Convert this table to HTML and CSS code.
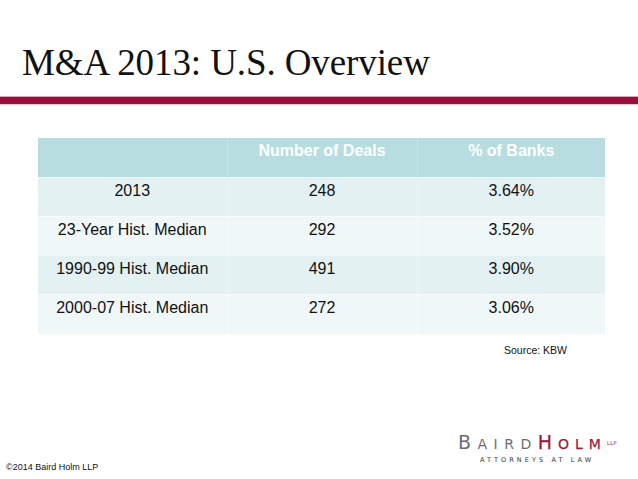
FILE: index.html
```html
<!DOCTYPE html>
<html>
<head>
<meta charset="utf-8">
<link rel="stylesheet" href="styles.css">
</head>
<body>
<div class="slide">
  <h1 class="title">M&amp;A 2013: U.S. Overview</h1>
  <div class="rule"></div>
  <table class="data">
    <thead>
      <tr><th></th><th>Number of Deals</th><th>% of Banks</th></tr>
    </thead>
    <tbody>
      <tr class="odd"><td>2013</td><td>248</td><td>3.64%</td></tr>
      <tr class="even"><td>23-Year Hist. Median</td><td>292</td><td>3.52%</td></tr>
      <tr class="odd"><td>1990-99 Hist. Median</td><td>491</td><td>3.90%</td></tr>
      <tr class="even last"><td>2000-07 Hist. Median</td><td>272</td><td>3.06%</td></tr>
    </tbody>
  </table>
  <div class="source">Source: KBW</div>
  <div class="footer">
    <div class="copy">©2014 Baird Holm LLP</div>
    <div class="logo">
      <div class="logo-name"><span class="baird"><span class="cap">B</span>AIRD</span><span class="holm"><span class="cap">H</span>OLM</span><span class="llp">LLP</span></div>
      <div class="logo-sub">ATTORNEYS AT LAW</div>
    </div>
  </div>
</div>
</body>
</html>
```

FILE: styles.css
```css
html, body {
  margin: 0;
  padding: 0;
  background: #ffffff;
}
.slide {
  width: 638px;
  height: 479px;
  overflow: hidden;
  display: flex;
  flex-direction: column;
  font-family: "Liberation Sans", Arial, sans-serif;
}
.title {
  margin: 43px 0 0 22px;
  font-family: "Liberation Serif", "Times New Roman", serif;
  font-weight: normal;
  font-size: 37px;
  line-height: 40px;
  color: #111111;
  letter-spacing: -0.1px;
}
.rule {
  margin-top: 13px;
  height: 7px;
  background: #9a0c3b;
  border-top: 1px solid #dba3b5;
  border-bottom: 1px solid #e9c3cf;
}
.data {
  margin: 33px 0 0 38px;
  width: 567px;
  border-collapse: collapse;
  table-layout: fixed;
  font-size: 16px;
  color: #111111;
}
.data th, .data td {
  height: 39px;
  padding: 4px 0 0 0;
  box-sizing: border-box;
  vertical-align: top;
  text-align: center;
  line-height: 18px;
}
.data th:nth-child(1), .data td:nth-child(1) { width: 189px; }
.data th:nth-child(2), .data td:nth-child(2) { width: 190px; }
.data th:nth-child(3), .data td:nth-child(3) { width: 188px; }
.data th {
  background: #b7dde1;
  color: #ffffff;
  font-weight: bold;
  border-left: 1px solid #c7e5e8;
}
.data th:first-child { border-left: none; }
.data td {
  border-left: 1px solid rgba(255, 255, 255, 0.35);
  border-top: 1px solid rgba(255, 255, 255, 0.5);
}
.data td:first-child { border-left: none; }
.data tr.odd td { background: #e3f1f3; }
.data tr.even td { background: #f0f7f9; }
.data tr.last td { height: 40px; }
.source {
  align-self: flex-end;
  margin: 10px 71px 0 0;
  font-size: 10.5px;
  line-height: 12px;
  color: #111111;
}
.footer {
  margin-top: auto;
  display: flex;
  justify-content: space-between;
  align-items: flex-end;
  padding: 0 21px 6px 6px;
}
.copy {
  font-size: 9px;
  line-height: 11px;
  color: #111111;
}
.logo {
  display: flex;
  flex-direction: column;
  align-items: flex-start;
  margin-bottom: 9px;
}
.logo-name {
  display: flex;
  align-items: baseline;
  font-family: "DejaVu Sans", "Liberation Sans", sans-serif;
  font-size: 14px;
  line-height: 17px;
  letter-spacing: 6.5px;
}
.logo-name .cap { font-size: 19px; }
.baird { color: #6d6e71; }
.holm {
  color: #991b3e;
  letter-spacing: 6px;
  -webkit-text-stroke: 0.25px #991b3e;
}
.llp {
  font-size: 5px;
  letter-spacing: 0.5px;
  color: #991b3e;
  align-self: flex-start;
  margin: 1px 0 0 0;
}
.logo-sub {
  margin: 4px 0 0 22px;
  font-family: "DejaVu Sans", "Liberation Sans", sans-serif;
  font-size: 6.5px;
  line-height: 7px;
  letter-spacing: 3.1px;
  color: #333333;
}
```
